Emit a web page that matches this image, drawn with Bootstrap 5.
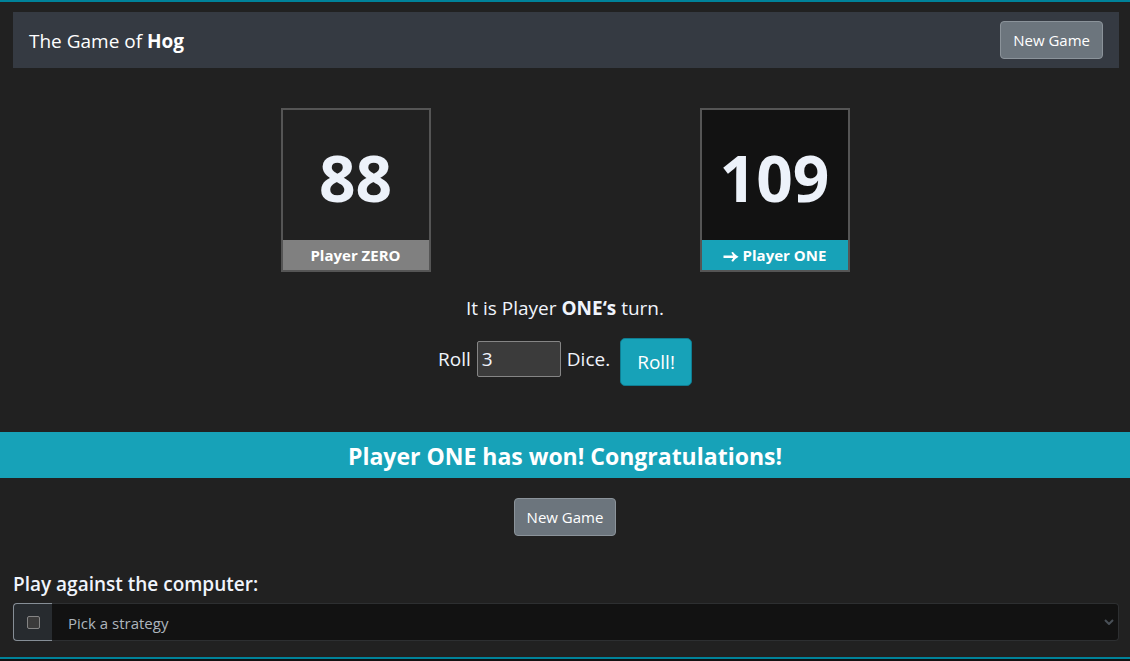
<!DOCTYPE html>
<html lang="en">
<head>
<meta charset="utf-8">
<meta name="viewport" content="width=device-width, initial-scale=1">
<title>The Game of Hog</title>
<link href="https://cdn.jsdelivr.net/npm/bootstrap@5.3.0/dist/css/bootstrap.min.css" rel="stylesheet">
<style>
  :root { --teal: #17a2b8; --edge: #008299; --pale: #f0f4fc; }
  body { background: #121212; color: var(--pale); font-family: "Open Sans", "Noto Sans", sans-serif; font-size: 15px; line-height: 24px; }
  .hog-app { background: #212121; border-top: 2px solid var(--edge); border-bottom: 2px solid var(--edge); padding: 10px 0 16px; }
  .gutter { padding-left: 13px; padding-right: 11px; }
  .hog-bar { background: #353a42; height: 56px; }
  .hog-title, .turn-line, .roll-line, .versus { font-size: 19px; line-height: 30px; }
  .hog-title { padding-top: 2px; }
  .btn-new { --bs-btn-color: #fff; --bs-btn-bg: #6c757d; --bs-btn-border-color: #8b939a; --bs-btn-hover-color: #fff; --bs-btn-hover-bg: #5c636a; --bs-btn-hover-border-color: #8b939a; font-size: 15px; line-height: 24px; padding: 6px 12px; border-radius: 4px; }
  .players { max-width: 838px; margin-top: 40px; }
  .score-box { width: 150px; border: 2px solid #555; }
  .score-box .points { font-size: 64px; height: 130px; line-height: 136px; color: #edf2fa; }
  .score-box .who { background: #808080; color: #fff; line-height: 30px; }
  .score-box.current .points { background: #121212; }
  .score-box.current .who { background: var(--teal); }
  .turn-line { margin-top: 21px; }
  .roll-line { margin-top: 15px; }
  .roll-line .dice { width: 84px; height: 36px; padding: 1px 4px; border: 1px solid #858585; border-radius: 2px; background: #3b3b3b; color: var(--pale); margin: 0 6px; }
  .dice-group { padding-top: 3px; }
  .btn-roll { --bs-btn-color: #fff; --bs-btn-bg: var(--teal); --bs-btn-border-color: #0f7d92; --bs-btn-hover-color: #fff; --bs-btn-hover-bg: #138496; --bs-btn-hover-border-color: #0f7d92; font-size: 19px; line-height: 30px; padding: 8px 16px; border-radius: 5px; margin-left: 10px; }
  .win-banner { background: var(--teal); color: #fff; font-size: 23px; line-height: 44px; padding-top: 2px; margin-top: 46px; }
  .after-win { margin: 20px 0 33px; }
  .versus { margin-bottom: 4px; }
  .strategy .tick { background: #272b2f; border: 1px solid #868e96; border-right-color: #272b2f; border-radius: 4px 0 0 4px; width: 40px; height: 38px; padding: 0; }
  .strategy .tick input { appearance: none; width: 13px; height: 13px; margin: 0; border: 1px solid #858585; border-radius: 2px; background: #3b3b3b; }
  .strategy .tick input:checked { background: var(--teal); }
  .strategy .form-select { height: 38px; font-size: 15px; line-height: 24px; padding: 7px 32px 5px 16px; color: #adb5bd; border: 1px solid #2d2f31; border-left: 0; border-radius: 0 4px 4px 0; background-color: #121212; background-image: url("data:image/svg+xml,%3csvg xmlns='http://www.w3.org/2000/svg' viewBox='0 0 10 6'%3e%3cpath fill='none' stroke='%23495057' stroke-width='2' d='M1 1l4 4 4-4'/%3e%3c/svg%3e"); background-size: 10px 6px; background-position: right 4px center; }
</style>
</head>
<body>
<main class="hog-app">
  <div class="gutter">
    <nav class="hog-bar d-flex align-items-center justify-content-between px-3">
      <span class="hog-title text-white">The Game of <strong>Hog</strong></span>
      <button type="button" class="btn btn-new">New Game</button>
    </nav>
  </div>

  <div class="players row g-0 mx-auto text-center fw-bold">
    <div class="col-6 d-flex justify-content-center">
      <div class="score-box">
        <div class="points">88</div>
        <div class="who">Player ZERO</div>
      </div>
    </div>
    <div class="col-6 d-flex justify-content-center">
      <div class="score-box current">
        <div class="points">109</div>
        <div class="who"><svg width="16" height="12" viewBox="0 0 16 12" aria-hidden="true"><path d="M.5 4.6H10.2L8.4 1.8Q9 .6 10.2 1.2Q12.2 4 15.6 5.8Q12.2 7.6 10.2 10.4Q9 11 8.4 9.8L10.2 7H.5Z" fill="#fff"/></svg> Player ONE</div>
      </div>
    </div>
  </div>

  <p class="turn-line text-center mb-0">It is Player <strong>ONE‘s</strong> turn.</p>

  <form class="roll-line d-flex justify-content-center" onsubmit="return false">
    <div class="dice-group d-flex align-items-center align-self-start">
      <label for="dice">Roll</label>
      <input class="dice" id="dice" type="text" inputmode="numeric" value="3">
      <span>Dice.</span>
    </div>
    <button type="submit" class="btn btn-roll">Roll!</button>
  </form>

  <div class="win-banner text-center fw-bold" role="status">Player ONE has won! Congratulations!</div>

  <div class="after-win text-center">
    <button type="button" class="btn btn-new">New Game</button>
  </div>

  <div class="gutter">
    <label class="versus d-block fw-semibold" for="strategy">Play against the computer:</label>
    <div class="strategy input-group">
      <div class="tick input-group-text justify-content-center">
        <input type="checkbox" aria-label="Play against the computer">
      </div>
      <select class="form-select" id="strategy">
        <option selected>Pick a strategy</option>
      </select>
    </div>
  </div>
</main>
<script src="https://cdn.jsdelivr.net/npm/bootstrap@5.3.0/dist/js/bootstrap.bundle.min.js"></script>
</body>
</html>
